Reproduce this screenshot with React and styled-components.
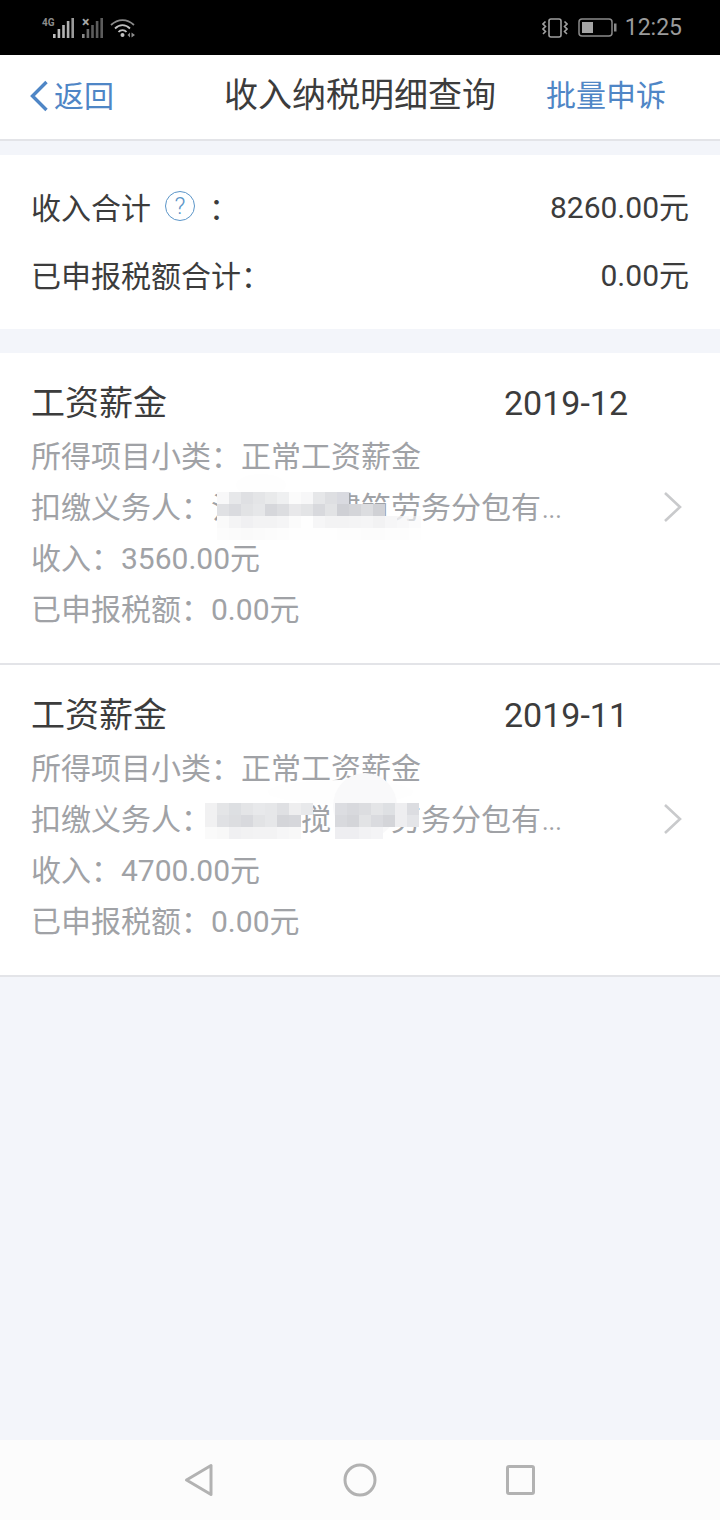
import React from "react";
import styled, { createGlobalStyle } from "styled-components";

const T = "transparent";

// payer parts: a number is a hidden stretch, counted in characters
const records = [
  {
    kind: "工资薪金",
    month: "2019-12",
    income: "3560.00元",
    payer: ["氵", 3, "建筑劳务分包有"],
  },
  {
    kind: "工资薪金",
    month: "2019-11",
    income: "4700.00元",
    payer: [3, "搅", 2, "劳务分包有"],
  },
];

// mosaic patches over the employer name
const blobs = [
  { left: 236, top: 474, w: 50, h: 22, tone: "#fefefe" },
  { left: 268, top: 780, w: 145, h: 24, tone: "#fefefe" },
  { left: 333, top: 773, w: 64, h: 66, tone: "#f9f9fa" },
];

const patches = [
  {
    left: 217,
    top: 492,
    rows: [
      ["#f8f8f9", "#e7e8ea", "#dfe0e3", "#e4e5e7", "#e9eaeb", "#eff0f1", "#fbfbfb", "#f7f7f8", "#e6e7e9", "#dedfe2", "#d9dae0", T, T, T, T, T, T],
      ["#e0e1e4", "#dadbdf", "#e2e3e5", "#e6e7e9", "#d6d7db", "#dcdde0", "#e8e8ea", "#e3e4e6", "#d8d9dd", "#e2e3e5", "#cfd0d5", "#d4d5d9", "#dcdde0", "#d0d1d5", T, T, T],
      ["#fafafa", "#f4f4f5", "#f0f0f2", "#f3f3f4", "#f3f3f4", "#f5f5f6", "#fbfbfb", "#fefefe", "#f6f6f7", "#f3f3f4", "#f3f3f4", "#f4f4f5", "#f5f5f6", "#f2f2f3", "#f6f6f7", "#f6f6f7cc", "#f9f9fa99"],
      ["#fcfcfc", "#fbfbfb", "#fafafa", "#fbfbfb", "#fcfcfc", "#fdfdfd", "#fefefe", "#fefefe", "#fefefe", "#fefefe", "#fdfdfd", "#fdfdfd", "#fcfcfc", "#fcfcfc", "#fdfdfd", "#fdfdfd", "#fefefe"],
    ],
  },
  {
    left: 205,
    top: 803,
    rows: [
      ["#f1f1f2", "#e4e5e7", "#dddfe2", "#e4e5e7", "#e8e9eb", "#e6e7e9", "#dfe0e3", "#eeeeef", "#e8e9eb"],
      ["#f1f1f2", "#e0e1e4", "#dcdde0", "#d8d9dd", "#e2e3e5", "#e6e7e9", "#d4d5d9", "#d6d7db", T],
      ["#fafafa", "#f8f8f8", "#f0f0f2", "#f2f2f3", "#f3f3f4", "#f3f3f4", "#f6f6f7", "#f8f8f8", T],
    ],
  },
  {
    left: 335,
    top: 803,
    rows: [
      ["#dcdde1", "#d8d9dd", "#dcdde0", "#e4e5e7", "#dee0e3", "#eeeef0", "#dcdde1"],
      ["#d8d9dd", "#d4d5d9", "#e2e3e5", "#dadbdf", "#d4d5d9", "#eeeef0", "#e4e5e8"],
      ["#eeeef1", "#eeeef1", "#f2f2f4", "#f4f4f6", T, T, T],
    ],
  },
];

export default function App() {
  return (
    <>
      <GlobalStyle />
      <Phone>
        <StatusBar>
          <StatusGroup>
            <SignalLabel>4G</SignalLabel>
            <Signal colors={["#bdbdbd", "#bdbdbd", "#b4b4b4", "#b0b0b0", "#9a9a9a"]} />
            <NoSimMark>×</NoSimMark>
            <Signal colors={["#8a8a8a", "#6a6a6a", "#5c5c5c", "#5c5c5c", "#5c5c5c"]} />
            <WifiIcon />
          </StatusGroup>
          <StatusGroup>
            <VibrateIcon />
            <BatteryIcon />
            <Clock>12:25</Clock>
          </StatusGroup>
        </StatusBar>

        <Header>
          <BackLink>
            <BackArrow width="18" height="32" viewBox="0 0 18 32" fill="none">
              <path d="M16.5 2 L2.5 16 L16.5 30" stroke="#4f86c6" strokeWidth="3.4" />
            </BackArrow>
            返回
          </BackLink>
          <PageTitle>收入纳税明细查询</PageTitle>
          <HeaderAction>批量申诉</HeaderAction>
        </Header>

        <Summary>
          <SummaryRow>
            <SummaryLabel>
              收入合计
              <HelpIcon>?</HelpIcon>
              <SummaryColon>：</SummaryColon>
            </SummaryLabel>
            <SummaryValue>8260.00元</SummaryValue>
          </SummaryRow>
          <SummaryRow>
            <SummaryLabel>已申报税额合计：</SummaryLabel>
            <SummaryValue>0.00元</SummaryValue>
          </SummaryRow>
        </Summary>

        <RecordList>
          {records.map((r) => (
            <Record key={r.month}>
              <RecordHead>
                <RecordKind>{r.kind}</RecordKind>
                <RecordMonth>{r.month}</RecordMonth>
              </RecordHead>
              <RecordLine>所得项目小类：正常工资薪金</RecordLine>
              <RecordLine>
                扣缴义务人：
                {r.payer.map((part, i) =>
                  typeof part === "number" ? <Blank key={i} $chars={part} /> : <span key={i}>{part}</span>
                )}
                <Dots>...</Dots>
              </RecordLine>
              <RecordLine>收入：{r.income}</RecordLine>
              <RecordLine>已申报税额：0.00元</RecordLine>
              <Chevron width="20" height="32" viewBox="0 0 20 32" fill="none">
                <path d="M2 2 L17 16 L2 30" stroke="#c9cacc" strokeWidth="2.6" />
              </Chevron>
            </Record>
          ))}
        </RecordList>

        {blobs.map((b) => (
          <Blob key={b.left} $left={b.left} $top={b.top} $w={b.w} $h={b.h} $tone={b.tone} />
        ))}
        {patches.map((p) => (
          <Patch key={p.left} $left={p.left} $top={p.top} $cols={p.rows[0].length}>
            {p.rows.flat().map((c, i) => (
              <PatchCell key={i} $tone={c} />
            ))}
          </Patch>
        ))}

        <NavBar>
          <svg width="30" height="34" viewBox="0 0 30 34" fill="none">
            <path d="M2.5 17 L27 2.5 V31.5 Z" stroke="#b2b2b2" strokeWidth="3" strokeLinejoin="round" />
          </svg>
          <svg width="34" height="34" viewBox="0 0 34 34" fill="none">
            <circle cx="17" cy="17" r="15" stroke="#b2b2b2" strokeWidth="3" />
          </svg>
          <svg width="29" height="30" viewBox="0 0 29 30" fill="none">
            <rect x="1.5" y="1.5" width="26" height="27" rx="1.5" stroke="#b2b2b2" strokeWidth="3" />
          </svg>
        </NavBar>
      </Phone>
    </>
  );
}

function Signal({ colors }) {
  const heights = [4, 9, 13, 17, 20];
  return (
    <svg width="21" height="20" viewBox="0 0 21 20">
      {heights.map((h, i) => (
        <rect key={i} x={i * 4.6} y={20 - h} width="2.6" height={h} fill={colors[i]} />
      ))}
    </svg>
  );
}

function WifiIcon() {
  return (
    <WifiSvg width="26" height="20" viewBox="0 0 26 20" fill="none" strokeWidth="1.8">
      <path d="M1 7 C8 0.5 17 0.5 24 7" stroke="#8a8a8a" />
      <path d="M5 10.5 C9.5 6 15.5 6 20 10.5" stroke="#c0c0c0" />
      <path d="M8.5 14 C10.5 11.5 14.5 11.5 16.5 14" stroke="#c0c0c0" />
      <circle cx="12.5" cy="17" r="2" fill="#c4c4c4" />
      <path d="M20 14.5 V19.5 L17.5 17 Z M21.5 14.5 V19.5 L25 17 Z" fill="#8c8c8c" />
    </WifiSvg>
  );
}

function VibrateIcon() {
  return (
    <svg width="26" height="20" viewBox="0 0 26 20" fill="none" stroke="#a0a0a0" strokeWidth="1.6">
      <rect x="7" y="1" width="12" height="18" rx="2" />
      <path d="M3.5 3.5 L1 6 L3.5 8.5 L1 11 L3.5 13.5 L1 16" />
      <path d="M22.5 3.5 L25 6 L22.5 8.5 L25 11 L22.5 13.5 L25 16" />
    </svg>
  );
}

function BatteryIcon() {
  return (
    <BatterySvg width="39" height="19" viewBox="0 0 39 19" fill="none">
      <rect x="1" y="1" width="33" height="17" rx="3" stroke="#8a8a8a" strokeWidth="1.5" />
      <rect x="4" y="4" width="11" height="11" fill="#a4a4a4" />
      <rect x="36" y="5.5" width="2.5" height="8" fill="#8a8a8a" />
    </BatterySvg>
  );
}

const GlobalStyle = createGlobalStyle`
  html, body {
    margin: 0;
    padding: 0;
  }
  body {
    font-family: Roboto, "Noto Sans CJK SC", sans-serif;
  }
`;

const Phone = styled.div`
  position: relative;
  display: flex;
  flex-direction: column;
  width: 720px;
  height: 1520px;
  overflow: hidden;
  background-color: #f3f5fa;
`;

const StatusBar = styled.div`
  display: flex;
  flex: none;
  justify-content: space-between;
  align-items: center;
  height: 55px;
  padding: 0 38px 0 42px;
  background-color: #000;
`;

const StatusGroup = styled.div`
  display: flex;
  align-items: center;
`;

const SignalLabel = styled.span`
  align-self: flex-start;
  width: 11px;
  font-size: 10px;
  line-height: 9px;
  font-weight: 700;
  color: #8c8c8c;
`;

const NoSimMark = styled.span`
  align-self: flex-start;
  width: 8px;
  margin: 0 -8px 0 8px;
  font-size: 14px;
  line-height: 8px;
  font-weight: 700;
  color: #a8a8a8;
`;

const WifiSvg = styled.svg`
  margin-left: 7px;
`;

const BatterySvg = styled.svg`
  margin-left: 10px;
`;

const Clock = styled.span`
  margin-left: 8px;
  font-size: 23px;
  color: #9b9b9b;
`;

const Header = styled.header`
  display: flex;
  flex: none;
  align-items: center;
  box-sizing: border-box;
  height: 86px;
  padding: 0 54px 7px 30px;
  background-color: #fff;
  border-bottom: 2px solid #e3e4e8;
`;

const BackLink = styled.div`
  display: flex;
  align-items: center;
  gap: 6px;
  font-size: 30px;
  color: #4f86c6;
`;

const BackArrow = styled.svg`
  margin-top: 5px;
`;

const PageTitle = styled.h1`
  margin: 0 0 2px 110px;
  font-size: 34px;
  font-weight: 400;
  color: #3c3c3c;
`;

const HeaderAction = styled.div`
  margin: 0 0 2px auto;
  font-size: 30px;
  color: #4f86c6;
`;

const Summary = styled.section`
  display: flex;
  flex: none;
  flex-direction: column;
  gap: 24px;
  box-sizing: border-box;
  height: 174px;
  margin-top: 14px;
  padding: 29px 31px 0;
  background-color: #fff;
`;

const SummaryRow = styled.div`
  display: flex;
  justify-content: space-between;
  align-items: center;
  height: 44px;
  font-size: 30px;
  color: #3c3c3c;
`;

const SummaryLabel = styled.div`
  display: flex;
  align-items: center;
`;

const SummaryValue = styled.span`
  margin-bottom: 3px;
`;

const HelpIcon = styled.span`
  display: flex;
  justify-content: center;
  align-items: center;
  box-sizing: border-box;
  width: 30px;
  height: 30px;
  margin-left: 14px;
  border: 1.5px solid #5b95c8;
  border-radius: 50%;
  font-size: 24px;
  font-weight: 300;
  color: #5b95c8;
`;

const SummaryColon = styled.span`
  margin-left: 14px;
`;

const RecordList = styled.div`
  display: flex;
  flex-direction: column;
  margin-top: 24px;
`;

const Record = styled.article`
  position: relative;
  box-sizing: border-box;
  height: 312px;
  padding: 26px 0 0 31px;
  background-color: #fff;
  border-bottom: 2px solid #e3e4e8;
`;

const RecordHead = styled.div`
  display: flex;
  align-items: center;
  height: 48px;
  margin-bottom: 4px;
  color: #3c3c3c;
`;

const RecordKind = styled.span`
  width: 473px;
  margin-bottom: 6px;
  font-size: 34px;
`;

const RecordMonth = styled.span`
  font-size: 34px;
`;

const RecordLine = styled.div`
  height: 51px;
  font-size: 30px;
  line-height: 51px;
  color: #a0a2a6;
  white-space: nowrap;
`;

const Dots = styled.span`
  margin-left: 1px;
  font-size: 25px;
`;

const Blank = styled.span`
  display: inline-block;
  width: ${(p) => p.$chars * 30}px;
`;

const Chevron = styled.svg`
  position: absolute;
  top: 138px;
  right: 37px;
`;

const Blob = styled.div`
  position: absolute;
  left: ${(p) => p.$left}px;
  top: ${(p) => p.$top}px;
  width: ${(p) => p.$w}px;
  height: ${(p) => p.$h}px;
  border-radius: 50%;
  background-color: ${(p) => p.$tone};
`;

const Patch = styled.div`
  position: absolute;
  left: ${(p) => p.$left}px;
  top: ${(p) => p.$top}px;
  display: grid;
  grid-template-columns: repeat(${(p) => p.$cols}, 12px);
  grid-auto-rows: 12px;
  filter: blur(0.6px);
`;

const PatchCell = styled.div`
  background-color: ${(p) => p.$tone};
`;

const NavBar = styled.nav`
  display: flex;
  justify-content: center;
  align-items: center;
  gap: 129px;
  margin-top: auto;
  height: 80px;
  padding-right: 1px;
  background-color: #fcfcfc;
`;
